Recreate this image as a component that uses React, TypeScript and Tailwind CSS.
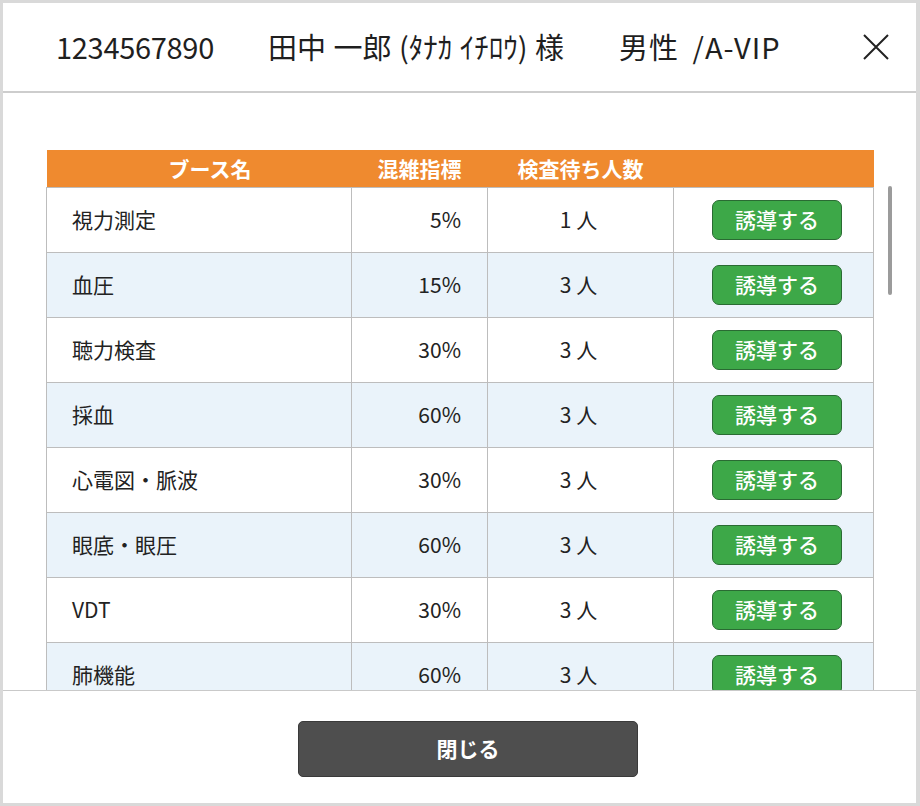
const booths = [
    { name: '視力測定', rate: '5%', wait: '1 人' },
    { name: '血圧', rate: '15%', wait: '3 人' },
    { name: '聴力検査', rate: '30%', wait: '3 人' },
    { name: '採血', rate: '60%', wait: '3 人' },
    { name: '心電図・脈波', rate: '30%', wait: '3 人' },
    { name: '眼底・眼圧', rate: '60%', wait: '3 人' },
    { name: 'VDT', rate: '30%', wait: '3 人' },
    { name: '肺機能', rate: '60%', wait: '3 人' },
];

export default function App() {
    return (
        <div
            className="w-[920px] h-[806px] bg-[#d9d9d9] pt-[3px] pb-[3px] pl-[3px] pr-[4px]"
            style={{ fontFamily: '"Noto Sans CJK JP", "Noto Sans", sans-serif' }}
        >
            <div className="h-full bg-white flex flex-col">
                {/* Header */}
                <div className="h-[90px] shrink-0 border-b-2 border-[#cdcdcd] flex items-center pl-[53px] pr-[26px] text-[29px] text-[#1f1f1f]">
                    <span className="tracking-[-0.3px]">1234567890</span>
                    <span className="ml-[54px] [word-spacing:1px]">田中 一郎 (ﾀﾅｶ ｲﾁﾛｳ) 様</span>
                    <span className="ml-[55px] [word-spacing:6px] tracking-[1px]">男性 /A-VIP</span>
                    <button className="ml-auto w-[28px] h-[28px] flex items-center justify-center text-[#222]">
                        <svg className="w-[28px] h-[28px]" viewBox="0 0 28 28" fill="none" stroke="currentColor" strokeWidth={2}>
                            <path d="M2 2l24 24M26 2L2 26" />
                        </svg>
                    </button>
                </div>

                {/* Booth list */}
                <div className="flex-1 relative overflow-hidden px-[43px] pt-[57px]">
                    <table className="w-[827px] border-collapse table-fixed text-[21px] text-[#222]">
                        <colgroup>
                            <col className="w-[305px]" />
                            <col className="w-[136px]" />
                            <col className="w-[186px]" />
                            <col className="w-[200px]" />
                        </colgroup>
                        <thead>
                            <tr className="h-[37px] bg-[#ef8a2f] text-white text-[21px] font-bold">
                                <th className="font-bold pl-[22px]">ブース名</th>
                                <th className="font-bold">混雑指標</th>
                                <th className="font-bold">検査待ち人数</th>
                                <th></th>
                            </tr>
                        </thead>
                        <tbody>
                            {booths.map((b, i) => (
                                <tr key={b.name} className={`h-[65px] ${i % 2 === 1 ? 'bg-[#eaf3fa]' : 'bg-white'}`}>
                                    <td className="border border-[#bdbdbd] pl-[25px]">{b.name}</td>
                                    <td className="border border-[#bdbdbd] text-right pr-[26px]">{b.rate}</td>
                                    <td className="border border-[#bdbdbd] text-center pr-[4px]">{b.wait}</td>
                                    <td className="border border-[#bdbdbd] pl-[38px]">
                                        <button className="w-[130px] h-[40px] rounded-[7px] bg-[#3da848] border border-[#2a6b33] text-white text-[21px] font-medium flex items-center justify-center">
                                            誘導する
                                        </button>
                                    </td>
                                </tr>
                            ))}
                        </tbody>
                    </table>

                    {/* Scroll thumb */}
                    <div className="absolute left-[885px] top-[93px] w-[4px] h-[109px] rounded-full bg-[#9b9b9b]" />
                </div>

                {/* Footer */}
                <div className="h-[113px] shrink-0 border-t border-[#c9c9c9] flex items-center justify-center">
                    <button className="w-[340px] h-[56px] mt-[4px] ml-[17px] rounded-[5px] bg-[#4e4e4e] border border-[#3a3a3a] text-white text-[21px] font-bold">
                        閉じる
                    </button>
                </div>
            </div>
        </div>
    );
}
